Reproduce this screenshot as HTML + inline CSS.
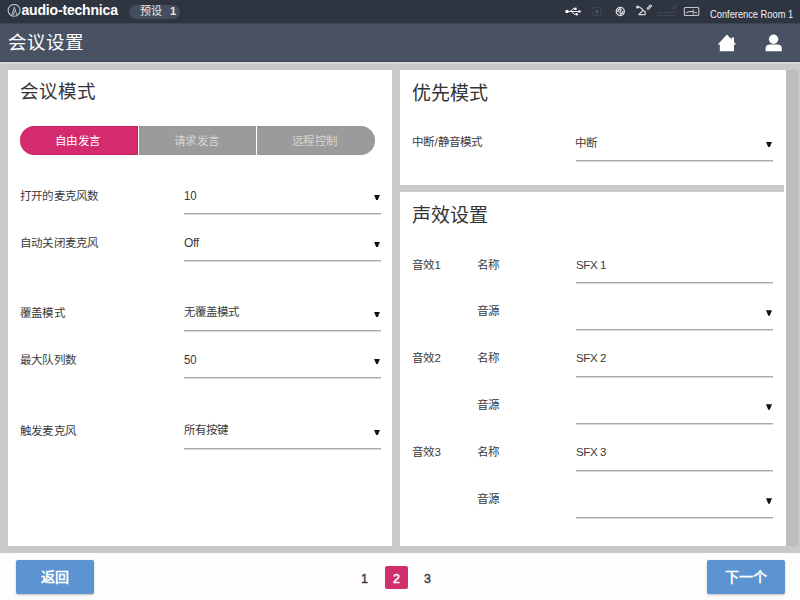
<!DOCTYPE html>
<html lang="zh-CN">
<head>
<meta charset="utf-8">
<style>
*{margin:0;padding:0;box-sizing:border-box}
html,body{width:800px;height:600px;overflow:hidden;background:#fdfdfd;font-family:"Liberation Sans",sans-serif;}
.abs{position:absolute}
#topbar{left:0;top:0;width:800px;height:23px;background:#2e3541}
#header{left:0;top:23px;width:800px;height:39px;background:#485263;border-top:1px solid #3d4552;border-bottom:1px solid #3e4856}
#content{left:0;top:62px;width:800px;height:491px;background:#c9c9c9;border-top:2px solid #d6d6d6}
.panel{background:#fff}
.t{position:absolute;white-space:nowrap;line-height:1}
.h2{font-size:19px;color:#333}
.lbl{font-size:11.5px;color:#3a3a3a;letter-spacing:0.2px}
.val{font-size:12px;color:#3a3a3a}
.lat{letter-spacing:-0.45px;font-size:11.6px}
.ul{position:absolute;height:1px;background:#aaa;box-shadow:0 1px 0 #dadada}
.tri{position:absolute;width:6px;height:5.5px;background:#111;clip-path:polygon(0 0,100% 0,62% 100%,38% 100%);margin-top:-0.3px}
.btn{position:absolute;background:#5b94d0;border-radius:2px;box-shadow:0 1px 2px rgba(0,0,0,0.25);color:#fff;font-weight:bold;font-size:14px;text-align:center;line-height:34px}
</style>
</head>
<body>
<div id="topbar" class="abs"></div>
<div id="header" class="abs"></div>
<div id="content" class="abs"></div>

<!-- logo -->
<svg class="abs" style="left:7px;top:4px" width="14" height="14" viewBox="0 0 14 14">
  <circle cx="7.1" cy="6.3" r="5.95" fill="none" stroke="#b4b8c0" stroke-width="1.2"/>
  <path d="M4.9 11.2 L7.3 2.9 L9.9 11.2 M6.3 11.2 L7.5 6.5" fill="none" stroke="#b4b8c0" stroke-width="1"/>
</svg>
<div class="t" style="left:21.5px;top:3px;font-size:14px;font-weight:bold;color:#fff;letter-spacing:-0.18px">audio-technica</div>
<div class="abs" style="left:129px;top:5px;width:51px;height:14px;border-radius:7px;background:#454d5d"></div>
<div class="t" style="left:140px;top:6px;font-size:11px;color:#e6e6e6">预设</div>
<div class="t" style="left:170px;top:6px;font-size:11px;font-weight:bold;color:#e8e6d8">1</div>

<!-- status icons -->
<svg class="abs" style="left:560px;top:0" width="145" height="23" viewBox="560 0 145 23">
  <g fill="#f4f4f6" stroke="#f4f4f6">
    <circle cx="567" cy="11.5" r="1.8" stroke="none"/>
    <path d="M567 11.5 H579.5" stroke-width="1" fill="none"/>
    <path d="M581.5 11.5 L578.6 9.8 V13.2 Z" stroke="none"/>
    <path d="M570.3 11.5 L572.8 8.8 H574.5" stroke-width="1" fill="none"/>
    <rect x="574.2" y="7.6" width="2.4" height="2.4" stroke="none"/>
    <path d="M571.8 11.5 L574.3 14.3 H576" stroke-width="1" fill="none"/>
    <circle cx="576.8" cy="14.3" r="1.2" stroke="none"/>
  </g>
  <rect x="592.8" y="7.5" width="8" height="8" rx="1.5" fill="none" stroke="#404652" stroke-width="1"/>
  <rect x="595.3" y="10" width="3" height="3.3" fill="#4e5460"/>
  <circle cx="620.3" cy="11.5" r="4.7" fill="#d8dbe0"/>
  <circle cx="620.3" cy="11.5" r="3.4" fill="#2e3541"/>
  <path d="M617.8 12.2 Q618 9.2 620.5 9 Q621.5 9.2 620.3 11.5 Q619.5 13.8 620.8 14 Q623 13.6 622.8 11" fill="none" stroke="#d8dbe0" stroke-width="1.3"/>
  <g fill="none" stroke="#d4d6da" stroke-width="1.2" stroke-linecap="round">
    <path d="M637.5 6.8 Q641.5 7 643 10.5"/>
    <path d="M643 10.5 L638.8 14.6 H645.2 V11.6 Z" stroke-linejoin="round"/>
    <path d="M648 8.5 L650.8 5.8" stroke-width="2.6"/>
  </g>
  <path d="M648 8.5 L650.8 5.8" stroke="#2e3541" stroke-width="0.6" stroke-linecap="round"/>
  <circle cx="637.5" cy="7" r="1.5" fill="#d4d6da"/>
  <rect x="658.3" y="12.5" width="16.5" height="3" fill="none" stroke="#3e4451" stroke-width="1"/>
  <path d="M673 8.5 L675.8 5.8" stroke="#3e4451" stroke-width="2.4" stroke-linecap="round"/>
  <rect x="684.3" y="7.5" width="14.5" height="8" rx="1" fill="none" stroke="#c2c5cb" stroke-width="1.1"/>
  <path d="M685.8 13 Q688 11.6 691 11.5 Q693 11.3 694 12 Q695.3 12.9 697 12.9" fill="none" stroke="#d8dadf" stroke-width="1"/>
  <path d="M693.2 9.2 V15" stroke="#c2c5cb" stroke-width="0.8"/>
</svg>
<div class="t" style="left:710px;top:9px;font-size:10.5px;color:#f2f2f2;transform:scaleX(0.885);transform-origin:0 0">Conference Room 1</div>

<!-- header title & icons -->
<div class="t" style="left:8px;top:34px;font-size:18.5px;color:#fff">会议设置</div>
<svg class="abs" style="left:717px;top:34px" width="20" height="18" viewBox="0 0 20 18">
  <path d="M10 0.6 L19.3 10.6 H17 V17.3 H2.8 V10.6 H0.7 Z" fill="#fff"/>
  <rect x="14.5" y="3.5" width="2.5" height="5" fill="#fff"/>
</svg>
<svg class="abs" style="left:765px;top:34px" width="18" height="18" viewBox="0 0 18 18">
  <circle cx="8.6" cy="5.2" r="4.7" fill="#fff"/>
  <path d="M0.6 17.3 V14.5 Q0.6 10.4 5 10.4 H12.2 Q16.8 10.4 16.8 14.5 V17.3 Z" fill="#fff"/>
</svg>

<!-- left panel -->
<div class="abs panel" style="left:8px;top:70px;width:384px;height:476px"></div>
<div class="t h2" style="left:20px;top:83px;font-size:18.5px">会议模式</div>

<div class="abs" style="left:20px;top:126px;width:118px;height:29px;background:#d32b6d;border:1px solid #c6225f;border-left:0;border-radius:15px 0 0 15px"></div>
<div class="abs" style="left:139px;top:126px;width:117px;height:29px;background:#9b9b9b;border:1px solid #949494;border-width:1px 0"></div>
<div class="abs" style="left:257px;top:126px;width:118px;height:29px;background:#9b9b9b;border:1px solid #949494;border-left:0;border-radius:0 15px 15px 0"></div>
<div class="t" style="left:55px;top:135.5px;font-size:11.5px;letter-spacing:0.3px;color:#fff;font-weight:500">自由发言</div>
<div class="t" style="left:174px;top:135.5px;font-size:11.5px;letter-spacing:0.3px;color:#d6d6d6;font-weight:500">请求发言</div>
<div class="t" style="left:292px;top:135.5px;font-size:11.5px;letter-spacing:0.3px;color:#d6d6d6;font-weight:500">远程控制</div>

<div class="t lbl" style="left:20px;top:191px">打开的麦克风数</div>
<div class="t val" style="left:184px;top:190px;transform:scaleX(0.95);transform-origin:0 0">10</div>
<div class="tri" style="left:374px;top:195px"></div>
<div class="ul" style="left:184px;top:213px;width:197px"></div>

<div class="t lbl" style="left:20px;top:238px">自动关闭麦克风</div>
<div class="t val" style="left:184px;top:237px;letter-spacing:-0.4px">Off</div>
<div class="tri" style="left:374px;top:242px"></div>
<div class="ul" style="left:184px;top:260px;width:197px"></div>

<div class="t lbl" style="left:20px;top:308px">覆盖模式</div>
<div class="t val" style="left:184px;top:307px;font-size:11.5px">无覆盖模式</div>
<div class="tri" style="left:374px;top:312px"></div>
<div class="ul" style="left:184px;top:330px;width:197px"></div>

<div class="t lbl" style="left:20px;top:355px">最大队列数</div>
<div class="t val" style="left:184px;top:354px;transform:scaleX(0.95);transform-origin:0 0">50</div>
<div class="tri" style="left:374px;top:359px"></div>
<div class="ul" style="left:184px;top:377px;width:197px"></div>

<div class="t lbl" style="left:20px;top:426px">触发麦克风</div>
<div class="t val" style="left:184px;top:425px;font-size:11.5px">所有按键</div>
<div class="tri" style="left:374px;top:430px"></div>
<div class="ul" style="left:184px;top:448px;width:197px"></div>

<!-- right panel -->
<div class="abs panel" style="left:400px;top:70px;width:386px;height:115px"></div>
<div class="abs panel" style="left:400px;top:192px;width:386px;height:354px"></div>
<div class="abs" style="left:784px;top:185px;width:2px;height:7px;background:#fff"></div>
<div class="abs" style="left:786px;top:70px;width:12px;height:476px;background:#bdbdbd"></div>

<div class="t h2" style="left:412px;top:84px">优先模式</div>
<div class="t lbl" style="left:412px;top:137px">中断/静音模式</div>
<div class="t val" style="left:575px;top:138px;font-size:11.5px">中断</div>
<div class="tri" style="left:766px;top:142px"></div>
<div class="ul" style="left:576px;top:160px;width:197px"></div>

<div class="t h2" style="left:412px;top:206px">声效设置</div>

<div class="t lbl" style="left:412px;top:260px">音效1</div>
<div class="t lbl" style="left:477px;top:260px">名称</div>
<div class="t val lat" style="left:576px;top:259px">SFX 1</div>
<div class="ul" style="left:576px;top:282px;width:197px"></div>
<div class="t lbl" style="left:477px;top:306px">音源</div>
<div class="tri" style="left:766px;top:310.5px"></div>
<div class="ul" style="left:576px;top:329px;width:197px"></div>

<div class="t lbl" style="left:412px;top:353px">音效2</div>
<div class="t lbl" style="left:477px;top:353px">名称</div>
<div class="t val lat" style="left:576px;top:352px">SFX 2</div>
<div class="ul" style="left:576px;top:376px;width:197px"></div>
<div class="t lbl" style="left:477px;top:400px">音源</div>
<div class="tri" style="left:766px;top:404.5px"></div>
<div class="ul" style="left:576px;top:423px;width:197px"></div>

<div class="t lbl" style="left:412px;top:447px">音效3</div>
<div class="t lbl" style="left:477px;top:447px">名称</div>
<div class="t val lat" style="left:576px;top:446px">SFX 3</div>
<div class="ul" style="left:576px;top:470px;width:197px"></div>
<div class="t lbl" style="left:477px;top:494px">音源</div>
<div class="tri" style="left:766px;top:498.5px"></div>
<div class="ul" style="left:576px;top:517px;width:197px"></div>

<!-- footer -->
<div class="btn" style="left:16px;top:560px;width:78px;height:34px">返回</div>
<div class="t" style="left:361px;top:572.5px;font-size:12.5px;color:#3a3a3a;-webkit-text-stroke:0.4px #3a3a3a">1</div>
<div class="abs" style="left:385px;top:566px;width:23px;height:23px;background:#d12e6c;border-radius:2px"></div>
<div class="t" style="left:393px;top:572.5px;font-size:12.5px;color:#fff;-webkit-text-stroke:0.5px #fff">2</div>
<div class="t" style="left:424px;top:572.5px;font-size:12.5px;color:#3a3a3a;-webkit-text-stroke:0.4px #3a3a3a">3</div>
<div class="btn" style="left:707px;top:560px;width:78px;height:34px">下一个</div>
</body>
</html>
